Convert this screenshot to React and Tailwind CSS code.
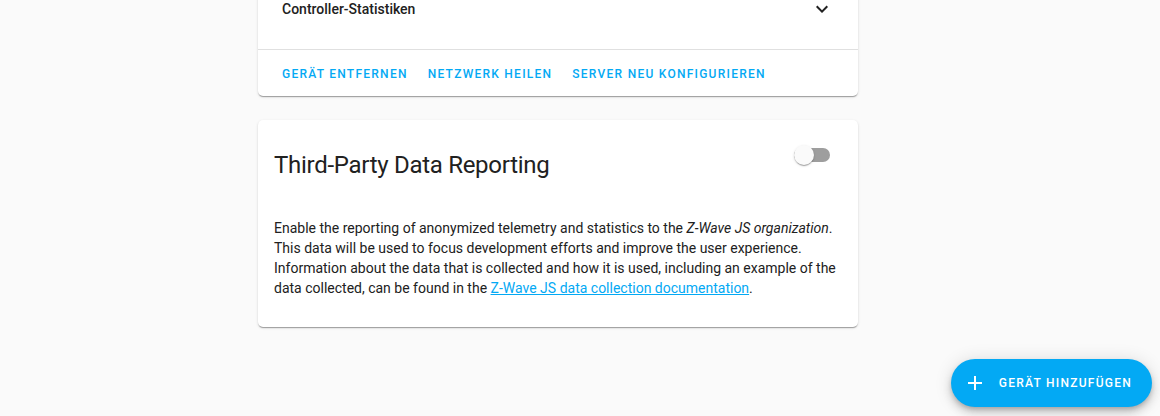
import React, { useState } from 'react';

const font = { fontFamily: 'Roboto, "Liberation Sans", sans-serif' };

const cardShadow =
  'shadow-[0_2px_1px_-1px_rgba(0,0,0,0.2),0_1px_1px_0_rgba(0,0,0,0.14),0_1px_3px_0_rgba(0,0,0,0.12)]';

const ChevronDown = () => (
  <svg className="w-6 h-6 text-[#212121]" viewBox="0 0 24 24" fill="currentColor">
    <path d="M7.41,8.58L12,13.17L16.59,8.58L18,10L12,16L6,10L7.41,8.58Z" />
  </svg>
);

const PlusIcon = () => (
  <svg className="w-6 h-6" viewBox="0 0 24 24" fill="currentColor">
    <path d="M19,13H13V19H11V13H5V11H11V5H13V11H19V13Z" />
  </svg>
);

const Toggle = ({ checked, onChange }) => (
  <button
    onClick={() => onChange(!checked)}
    className="relative w-[36px] h-[20px] flex items-center"
  >
    <span
      className={`absolute left-0 right-0 h-[14px] rounded-full ${
        checked ? 'bg-[#03a9f4]/50' : 'bg-[#9e9e9e]'
      }`}
    ></span>
    <span
      className={`absolute top-0 w-[20px] h-[20px] rounded-full shadow-[0_2px_1px_-1px_rgba(0,0,0,0.2),0_1px_1px_0_rgba(0,0,0,0.14),0_1px_3px_0_rgba(0,0,0,0.12)] ${
        checked ? 'left-[16px] bg-[#03a9f4]' : 'left-0 bg-[#fafafa]'
      }`}
    ></span>
  </button>
);

const actions = ['Gerät entfernen', 'Netzwerk heilen', 'Server neu konfigurieren'];

export default function App() {
  const [reporting, setReporting] = useState(false);

  return (
    <div className="relative h-[416px] w-full overflow-hidden bg-[#fafafa]" style={font}>
      <div className="ml-[258px] w-[600px] -mt-[15px] flex flex-col gap-6">
        {/* Controller card */}
        <div className={`bg-white rounded-[5px] ${cardShadow}`}>
          <div className="pb-4">
            <div className="h-12 flex items-center justify-between pl-6 pr-6">
              <span className="text-[14px] font-medium text-[#212121]">Controller-Statistiken</span>
              <ChevronDown />
            </div>
          </div>
          <div className="border-t border-[#e0e0e0] px-4 pt-[6px] pb-[4px] flex gap-1">
            {actions.map((a) => (
              <button
                key={a}
                className="h-9 px-2 uppercase text-[12px] font-medium tracking-[1.25px] text-[#03a9f4] rounded"
              >
                {a}
              </button>
            ))}
          </div>
        </div>

        {/* Third-party card */}
        <div className={`bg-white rounded-[5px] ${cardShadow}`}>
          <div className="flex justify-between items-start pl-4 pr-[28px] pt-[25px]">
            <h2 className="mt-[4px] text-[24px] leading-[32px] tracking-[-0.012em] text-[#212121]">
              Third-Party Data Reporting
            </h2>
            <Toggle checked={reporting} onChange={setReporting} />
          </div>
          <div className="px-4 pt-[37px] pb-[29px]">
            <p className="text-[14px] leading-[20px] text-[#212121]">
              Enable the reporting of anonymized telemetry and statistics to the{' '}
              <em>Z-Wave JS organization</em>. This data will be used to focus development
              efforts and improve the user experience. Information about the data that is
              collected and how it is used, including an example of the data collected, can be
              found in the{' '}
              <a href="#" className="text-[#03a9f4] underline">
                Z-Wave JS data collection documentation
              </a>
              .
            </p>
          </div>
        </div>
      </div>

      {/* FAB */}
      <button className="absolute right-[8px] bottom-[9px] h-12 pl-3 pr-5 rounded-full bg-[#03a9f4] text-white flex items-center gap-3 shadow-[0_3px_5px_-1px_rgba(0,0,0,0.2),0_6px_10px_0_rgba(0,0,0,0.14),0_1px_18px_0_rgba(0,0,0,0.12)]">
        <PlusIcon />
        <span className="uppercase text-[12px] font-medium tracking-[1.25px]">Gerät hinzufügen</span>
      </button>
    </div>
  );
}
